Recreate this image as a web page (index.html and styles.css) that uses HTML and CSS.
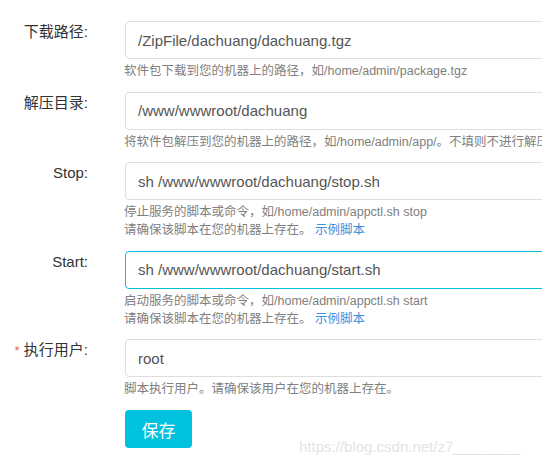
FILE: index.html
```html
<!DOCTYPE html>
<html lang="zh-CN">
<head>
    <meta charset="UTF-8">
    <meta name="viewport" content="width=device-width, initial-scale=1.0">
    <title>部署配置</title>
    <link rel="stylesheet" href="styles.css">
</head>
<body>
    <form class="deploy-form">
        <!-- 下载路径 -->
        <div class="form-row">
            <label class="form-label" for="download">下载路径:</label>
            <div class="form-field">
                <input class="form-input" type="text" id="download" value="/ZipFile/dachuang/dachuang.tgz">
                <div class="form-hint">软件包下载到您的机器上的路径，如/home/admin/package.tgz</div>
            </div>
        </div>

        <!-- 解压目录 -->
        <div class="form-row">
            <label class="form-label" for="unpack">解压目录:</label>
            <div class="form-field">
                <input class="form-input" type="text" id="unpack" value="/www/wwwroot/dachuang">
                <div class="form-hint">将软件包解压到您的机器上的路径，如/home/admin/app/。不填则不进行解压</div>
            </div>
        </div>

        <!-- Stop -->
        <div class="form-row">
            <label class="form-label" for="stop">Stop:</label>
            <div class="form-field">
                <input class="form-input" type="text" id="stop" value="sh /www/wwwroot/dachuang/stop.sh">
                <div class="form-hint">停止服务的脚本或命令，如/home/admin/appctl.sh stop</div>
                <div class="form-hint">请确保该脚本在您的机器上存在。 <a class="hint-link" href="#">示例脚本</a></div>
            </div>
        </div>

        <!-- Start -->
        <div class="form-row">
            <label class="form-label" for="start">Start:</label>
            <div class="form-field">
                <input class="form-input is-focused" type="text" id="start" value="sh /www/wwwroot/dachuang/start.sh">
                <div class="form-hint">启动服务的脚本或命令，如/home/admin/appctl.sh start</div>
                <div class="form-hint">请确保该脚本在您的机器上存在。 <a class="hint-link" href="#">示例脚本</a></div>
            </div>
        </div>

        <!-- 执行用户 -->
        <div class="form-row">
            <label class="form-label" for="user"><span class="required">*</span> 执行用户:</label>
            <div class="form-field">
                <input class="form-input" type="text" id="user" value="root">
                <div class="form-hint">脚本执行用户。请确保该用户在您的机器上存在。</div>
            </div>
        </div>

        <div class="form-row">
            <div class="form-label"></div>
            <div class="form-field">
                <button class="save-btn" type="button">保存</button>
            </div>
        </div>
    </form>

    <div class="watermark">https://blog.csdn.net/z7________</div>
</body>
</html>
```

FILE: styles.css
```css
body {
    margin: 0;
    background-color: white;
    font-family: "Liberation Sans", Arial, "Noto Sans CJK SC", sans-serif;
    color: #333;
    overflow: hidden;
    position: relative;
    height: 468px;
}
.deploy-form {
    padding-top: 21px;
    width: 600px;
}
.form-row {
    display: flex;
    margin-bottom: 11.5px;
}
.form-label {
    width: 88px;
    flex-shrink: 0;
    text-align: right;
    font-size: 15px;
    line-height: 20px;
    color: #333;
    padding-top: 1px;
    white-space: nowrap;
}
.required {
    color: #f0625e;
    font-size: 13px;
}
.form-field {
    margin-left: 37px;
    flex: 1;
    min-width: 0;
}
.form-input {
    display: block;
    box-sizing: border-box;
    width: 450px;
    height: 38px;
    padding: 0 12px;
    border: 1px solid #dedede;
    border-radius: 4px;
    font-family: inherit;
    font-size: 15px;
    color: #555;
    background: white;
    outline: none;
}
.form-input.is-focused {
    border-color: #00c1de;
}
.form-hint {
    font-size: 12.5px;
    line-height: 18px;
    color: #808080;
    white-space: nowrap;
    margin-left: -1px;
}
.form-input + .form-hint {
    margin-top: 3px;
}
.hint-link {
    color: #3d8ee0;
    text-decoration: none;
}
.save-btn {
    width: 67px;
    height: 38px;
    margin-top: 0.5px;
    border: none;
    border-radius: 4px;
    background-color: #00c1de;
    color: white;
    font-family: inherit;
    font-size: 17px;
}
.watermark {
    position: absolute;
    left: 299px;
    top: 438px;
    font-size: 15px;
    color: #e4e4e4;
    white-space: nowrap;
}
```
